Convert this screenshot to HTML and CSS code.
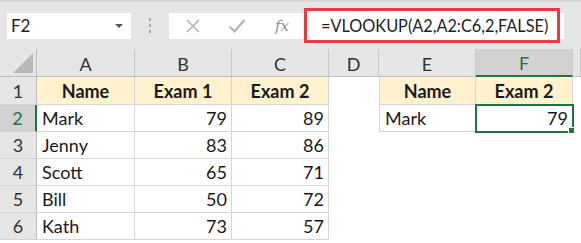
FILE: index.html
```html
<!DOCTYPE html>
<html lang="en">
<head>
    <meta charset="UTF-8">
    <title>VLOOKUP example</title>
    <link rel="stylesheet" href="styles.css">
</head>
<body>
    <div class="bar">
        <div class="namebox">
            <span>F2</span>
            <span class="drop"></span>
        </div>
        <div class="dots"><i></i><i></i><i></i></div>
        <div class="fx-strip">
            <svg class="icon" width="16" height="16" viewBox="0 0 16 16">
                <path d="M2 2 L14 14 M14 2 L2 14" stroke="#b4b4b4" stroke-width="1.6" fill="none"/>
            </svg>
            <svg class="icon" width="18" height="16" viewBox="0 0 18 16">
                <path d="M1.5 8.5 L6.5 13.5 L16.5 2" stroke="#b4b4b4" stroke-width="2.2" fill="none"/>
            </svg>
            <span class="fx">fx</span>
            <div class="formula">=VLOOKUP(A2,A2:C6,2,FALSE)</div>
        </div>
    </div>

    <div class="sheet">
        <div class="hd corner"></div>
        <div class="hd">A</div>
        <div class="hd">B</div>
        <div class="hd">C</div>
        <div class="hd">D</div>
        <div class="hd">E</div>
        <div class="hd sel">F</div>
        <div class="hd"></div>

        <div class="rh">1</div>
        <div class="c th">Name</div>
        <div class="c th">Exam 1</div>
        <div class="c th">Exam 2</div>
        <div class="e"></div>
        <div class="c th first">Name</div>
        <div class="c th">Exam 2</div>
        <div class="e"></div>

        <div class="rh sel">2</div>
        <div class="c">Mark</div>
        <div class="c n">79</div>
        <div class="c n">89</div>
        <div class="e"></div>
        <div class="c first">Mark</div>
        <div class="c n active">79</div>
        <div class="e"></div>

        <div class="rh">3</div>
        <div class="c">Jenny</div>
        <div class="c n">83</div>
        <div class="c n">86</div>
        <div class="e wide"></div>

        <div class="rh">4</div>
        <div class="c">Scott</div>
        <div class="c n">65</div>
        <div class="c n">71</div>
        <div class="e wide"></div>

        <div class="rh">5</div>
        <div class="c">Bill</div>
        <div class="c n">50</div>
        <div class="c n">72</div>
        <div class="e wide"></div>

        <div class="rh">6</div>
        <div class="c">Kath</div>
        <div class="c n">73</div>
        <div class="c n">57</div>
        <div class="e wide"></div>
    </div>
</body>
</html>
```

FILE: styles.css
```css
body{
    margin:0;
    font-family: Lato, "Open Sans", sans-serif;
    font-size:18px;
    color:#1a1a1a;
    background:#fff;
}

/* FORMULA BAR */
.bar{
    display:flex;
    align-items:center;
    height:49px;
    box-sizing:border-box;
    padding-left:7px;
    background:#e6e6e6;
    border-top:2px solid #d9d9d9;
}
.namebox{
    width:124px;
    height:26px;
    background:#fff;
    display:flex;
    align-items:center;
    justify-content:space-between;
    padding:0 8px 0 4px;
    box-sizing:border-box;
    color:#222;
    font-size:17px;
}
.drop{
    width:0;
    height:0;
    border-left:4px solid transparent;
    border-right:4px solid transparent;
    border-top:4px solid #555;
}
.dots{
    display:flex;
    flex-direction:column;
    gap:3px;
    margin:0 18px 0 18px;
}
.dots i{
    display:block;
    width:2px;
    height:3px;
    background:#a6a6a6;
}
.fx-strip{
    display:flex;
    align-items:center;
    width:395px;
    height:26px;
    background:#fff;
}
.icon{
    margin-left:16px;
}
.icon + .icon{
    margin-left:27px;
}
.fx{
    margin-left:29px;
    font-family:"DejaVu Serif", serif;
    font-style:italic;
    font-size:15px;
    color:#8f8f8f;
}
.formula{
    margin-left:auto;
    margin-right:4px;
    width:256px;
    height:35px;
    box-sizing:border-box;
    border:3px solid #ea3a3f;
    background:#fff;
    display:flex;
    align-items:center;
    padding-left:14px;
    color:#222;
    font-size:16.3px;
}

/* SHEET */
.sheet{
    display:grid;
    grid-template-columns:37px 98px 97px 97px 50px 97px 97px 8px;
    grid-template-rows:28px 28px 27px 27px 27px 27px 27px;
}
.hd{
    background:#e6e6e6;
    border-bottom:1px solid #bdbdbd;
    border-right:1px solid #cacaca;
    display:flex;
    align-items:center;
    justify-content:center;
    color:#333;
    box-sizing:border-box;
    padding-top:2px;
}
.hd.sel{
    background:#d2d2d2;
    color:#217346;
    border-bottom:2px solid #217346;
}
.corner{
    position:relative;
    border-right:1px solid #bdbdbd;
}
.corner::after{
    content:"";
    position:absolute;
    right:3px;
    bottom:3px;
    border-left:20px solid transparent;
    border-bottom:20px solid #b8b8b8;
}
.rh{
    background:#e6e6e6;
    border-right:1px solid #bdbdbd;
    border-bottom:1px solid #d6d6d6;
    display:flex;
    align-items:center;
    justify-content:center;
    color:#333;
    box-sizing:border-box;
}
.rh.sel{
    background:#d2d2d2;
    color:#217346;
    border-right:2px solid #217346;
}
.c{
    border-right:1px solid #d6d6d6;
    border-bottom:1px solid #d6d6d6;
    display:flex;
    align-items:center;
    padding:0 5px;
    box-sizing:border-box;
    position:relative;
}
.c.first{
    border-left:1px solid #d6d6d6;
}
.th{
    background:#fff2cc;
    font-weight:bold;
    justify-content:center;
}
.n{
    justify-content:flex-end;
    padding-right:4px;
}
.active{
    outline:2px solid #217346;
    outline-offset:-1px;
}
.active::after{
    content:"";
    position:absolute;
    right:-3px;
    bottom:-3px;
    width:5px;
    height:5px;
    background:#217346;
    border:1px solid #fff;
}
.wide{
    grid-column:span 4;
}
```
